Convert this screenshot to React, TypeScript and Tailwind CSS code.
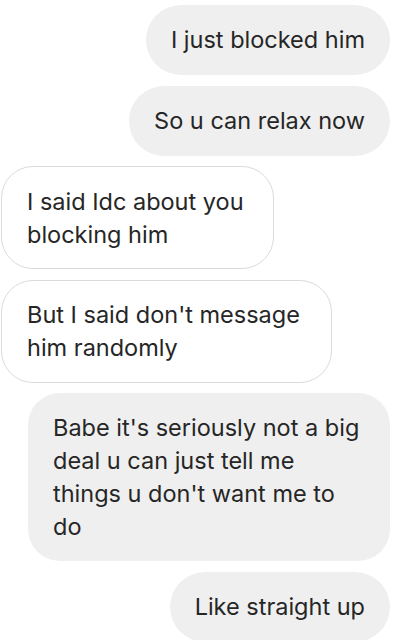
import React from "react";

const font = { fontFamily: "Inter, 'Liberation Sans', sans-serif" };

function Right({ children, cls = "" }: { children: React.ReactNode; cls?: string }) {
  return (
    <div className="flex justify-end pr-[13px]">
      <div className={`bg-[#efefef] rounded-[35px] px-[25px] py-[18px] text-[23.5px] leading-[34px] text-[#262626] whitespace-nowrap ${cls}`}>
        {children}
      </div>
    </div>
  );
}

function Left({ children, cls = "" }: { children: React.ReactNode; cls?: string }) {
  return (
    <div className="flex justify-start pl-[1px]">
      <div className={`bg-white border border-[#dbdbdb] rounded-[32px] px-[25px] py-[17.5px] text-[23.5px] leading-[33px] text-[#262626] whitespace-nowrap ${cls}`}>
        {children}
      </div>
    </div>
  );
}

export default function App() {
  return (
    <div className="w-[403px] h-[640px] bg-white overflow-hidden flex flex-col gap-[10.5px] pt-[5px]" style={font}>
      <Right>I just blocked him</Right>
      <Right>So u can relax now</Right>
      <Left cls="w-[273px]">
        I said Idc about you
        <br />
        blocking him
      </Left>
      <Left cls="w-[331px]">
        But I said don't message
        <br />
        him randomly
      </Left>
      <div className="flex justify-end pr-[13px]">
        <div className="w-[362px] bg-[#efefef] rounded-[32px] px-[25px] py-[18px] text-[23.5px] leading-[33px] text-[#262626] whitespace-nowrap">
          Babe it's seriously not a big
          <br />
          deal u can just tell me
          <br />
          things u don't want me to
          <br />
          do
        </div>
      </div>
      <Right>Like straight up</Right>
    </div>
  );
}
